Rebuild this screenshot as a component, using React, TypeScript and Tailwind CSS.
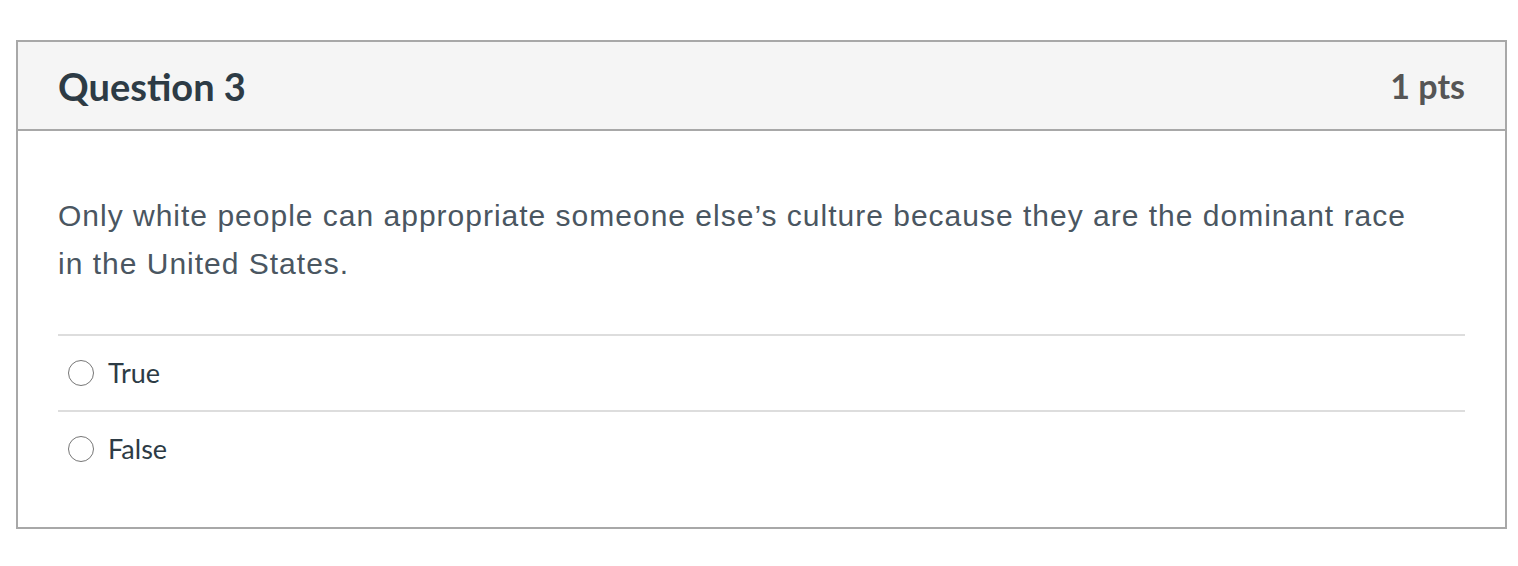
import React from "react";

const ANSWERS = ["True", "False"];

function Radio() {
  return (
    <span className="w-[26px] h-[26px] rounded-full border-[1.5px] border-[#767676] bg-white shrink-0" />
  );
}

export default function App() {
  return (
    <div className="bg-white w-[1518px] h-[566px] pt-[40px] pl-[16px]">
      <div className="w-[1491px] border-2 border-[#a8a8a8]">
        <div
          className="h-[89px] bg-[#f5f5f5] border-b-2 border-[#a8a8a8] flex items-center justify-between px-[40px]"
          style={{ fontFamily: "Lato, 'Noto Sans', sans-serif" }}
        >
          <h2 className="text-[38px] font-bold text-[#2d3b45] leading-none">Question 3</h2>
          <span className="text-[34px] font-bold text-[#555555] leading-none">1 pts</span>
        </div>
        <div className="px-[40px] pt-[61px] pb-[41px]">
          <p
            className="text-[30px] leading-[48px] tracking-[1px] text-[#4a5661] pr-[50px]"
            style={{ fontFamily: "'Liberation Sans', Arial, sans-serif" }}
          >
            Only white people can appropriate someone else’s culture because they are the dominant race in the United States.
          </p>
          <div className="mt-[46px]" style={{ fontFamily: "Lato, 'Noto Sans', sans-serif" }}>
            {ANSWERS.map((a) => (
              <div key={a} className="h-[76px] border-t-2 border-[#dddddd] flex items-center gap-[14px] pl-[10px]">
                <Radio />
                <span className="text-[27px] text-[#2d3b45]">{a}</span>
              </div>
            ))}
          </div>
        </div>
      </div>
    </div>
  );
}
